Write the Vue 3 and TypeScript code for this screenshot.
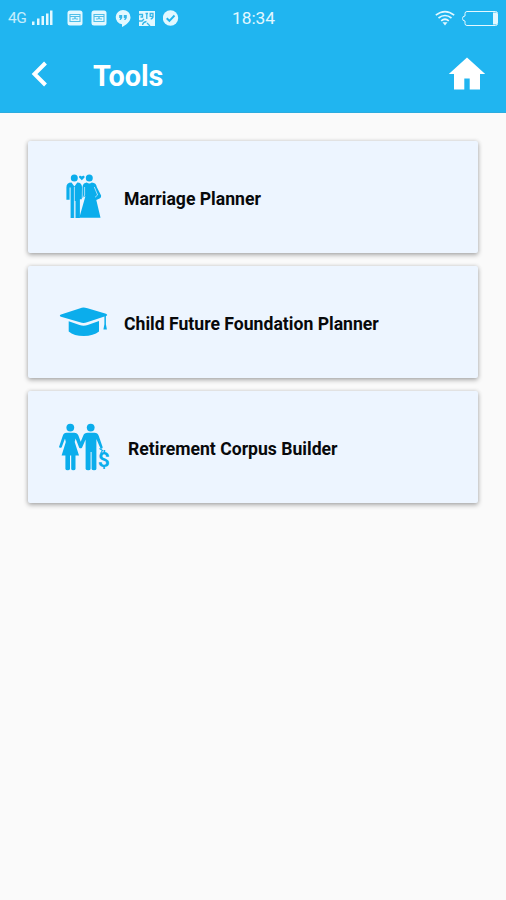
<script setup lang="ts">
interface Tool {
  id: 'marriage' | 'child' | 'retirement'
  label: string
}

const tools: Tool[] = [
  { id: 'marriage', label: 'Marriage Planner' },
  { id: 'child', label: 'Child Future Foundation Planner' },
  { id: 'retirement', label: 'Retirement Corpus Builder' },
]
</script>

<template>
  <div class="screen">
    <header class="header">
      <div class="status">
        <span class="network">4G</span>
        <svg class="signal" width="21" height="18" viewBox="0 0 21 18">
          <path d="M0 12.500h2.500V16H0zM5 9.500h2.500V16H5zM9.500 7H12v9H9.500zM14 4.500h2.500V16H14zM18 1.500h2.500V16H18z" fill="currentColor" />
        </svg>
        <div class="notices">
          <svg v-for="n in 2" :key="n" width="16" height="16" viewBox="0 0 16 16">
            <rect x="0.500" y="0.500" width="15" height="15" rx="2.500" fill="currentColor" />
            <path d="M3 4.500h10v7H3zM3 6.500h10M5 9h2l1-1.500L9 9h2" fill="none" stroke="#4fbfe9" stroke-width="1.100" />
          </svg>
          <svg width="16" height="18" viewBox="0 0 16 18">
            <path d="M8 1a7.500 7.200 0 0 0-1 14.300V18c4-2 8.500-5.200 8.500-9.800A7.500 7.200 0 0 0 8 1z" fill="currentColor" />
            <path d="M4.200 6h3v3L5.800 11H4.500l.8-2H4.200zM8.800 6h3v3l-1.400 2H9.100l.8-2H8.800z" fill="#35b6e8" />
          </svg>
          <svg width="16" height="17" viewBox="0 0 16 17">
            <path d="M0 1h16v15H0z" fill="currentColor" />
            <path d="M0 4.500h3.500v2.500H1.500M6.500 3.500H9M7.800 3.500V9M14 7.500v-4h-2.800v2.800H14q0 2.200-2.300 2.700M0 11h3l2-2M3.500 15q.5-3 4-3.500M8 13l3 3" fill="none" stroke="#35b6e8" stroke-width="1.300" />
          </svg>
          <svg width="16" height="16" viewBox="0 0 16 16">
            <circle cx="7.500" cy="8" r="7.700" fill="currentColor" />
            <path d="M3.700 8.200l2.700 2.600 5.100-5.300" fill="none" stroke="#22b5ee" stroke-width="1.900" />
          </svg>
        </div>
        <span class="clock">18:34</span>
        <svg class="wifi" width="20" height="16" viewBox="0 0 20 16" fill="none" stroke="currentColor" stroke-width="1.700">
          <path d="M.8 5.200Q10-2 19.200 5.200M3.500 8Q10 3 16.500 8M6.200 10.800Q10 7.700 13.800 10.800" />
          <path d="M7.500 12.200h5L10 15.500z" fill="currentColor" stroke="none" />
        </svg>
        <svg class="battery" width="38" height="17" viewBox="0 0 38 17">
          <path d="M6 1.500h28.500q2 0 2 2v10q0 2-2 2H6q-2 0-2-2V11q-2.500 0-2.500-2.500T4 6V3.500q0-2 2-2z" fill="none" stroke="currentColor" stroke-width="1" />
          <path d="M32 2.500h4v12h-4z" fill="currentColor" />
        </svg>
      </div>
      <nav class="bar">
        <svg class="back" width="18" height="26" viewBox="0 0 18 26">
          <path d="M14.500 2L3.500 13l11 11" fill="none" stroke="currentColor" stroke-width="4" />
        </svg>
        <h1 class="title">Tools</h1>
        <svg class="home" width="38" height="34" viewBox="0 0 38 34">
          <path d="M19 .5L.8 17H6v15.500h10.300v-11h5.400v11H32V17h5.200z" fill="currentColor" />
        </svg>
      </nav>
    </header>

    <main class="list">
      <section v-for="tool in tools" :key="tool.id" class="card" :class="tool.id">
        <svg v-if="tool.id === 'marriage'" class="icon" viewBox="0 0 56 56" fill="currentColor">
          <circle cx="18.300" cy="9" r="3.500" />
          <circle cx="33.300" cy="9" r="3.500" />
          <path d="M25.800 11.300l-2.700-2.700c-.6-2 1.800-2.500 2.700-1 .9-1.500 3.300-1 2.700 1z" />
          <path d="M15.500 13.500l2.900 4 2.900-4c3.200 0 4.500 1.600 4.700 4.600l-.2 12.200h-1.900V49h-4.400V32h-1v17h-3.900V18.500h-1v12.300h-3.200V18.500c0-3.200 1.700-5 5.100-5z" />
          <path d="M30.800 13.500q2.500 2.200 5 0c3.200.2 4.500 1.800 5.100 4.700l4.200 8.300q.5 2.200-1.500 3l-3.300 1.500L44.500 48.700H23.300l6.100-21.400L26.500 29V18c.3-2.800 1.600-4.300 4.300-4.500z" />
          <path d="M18.400 18v31M28.600 18v8l-2 4M38.300 18l3.300 8-2.500 2.200" fill="none" stroke="#edf5ff" stroke-width=".7" />
        </svg>

        <svg v-else-if="tool.id === 'child'" class="icon" viewBox="0 0 56 56" fill="currentColor">
          <path d="M27.500 13.500q1.500 0 4 .8l18.500 5.400q2.500 1.300 0 2.400l-19 6.200q-3.500 1.300-7 0L5 22.800q-2.300-1.200 0-2.400l18.500-6q2.500-.9 4-.9z" />
          <path d="M12.700 27.200l10.800 3.900q4.200 1.200 8.200 0l11.300-4v10.500q-5.500 4.400-15.200 4.500-9.800 0-15.100-4.500z" />
          <path d="M48.400 22h1.500v8.200l1 5.300h-3.500l1-5.300z" />
        </svg>

        <svg v-else class="icon" viewBox="0 0 56 56" fill="currentColor">
          <circle cx="14.300" cy="8.600" r="3.900" />
          <circle cx="34.700" cy="8.600" r="3.900" />
          <path d="M10.500 13.800h7.700q3.200 0 4.300 3l2.200 6 2.600-6.200q1-2.800 4.200-2.800h7q3.200 0 4.200 3l4 11.500q0 1.900-2.200 1.300L40.400 20v30q-.3 1.300-2.300 1.300-2.200 0-2.500-1.300V33h-1v17q-.3 1.300-2.400 1.300T29.600 50V20.500L26 28.700q-1.500 1.200-2.800 0l-3.600-9.200-.9 3.500 4.300 13.500h-3.500V50q-.3 1.300-2.200 1.300T15.200 50V36.500H14V50q-.3 1.300-2.300 1.300T9.400 50V36.500H5.600L9.800 23 9 19.500l-3.300 8.700q-1.300 1.400-2.700-.2L6.700 17q1-3.200 3.800-3.200z" />
          <path d="M43.500 29.500l3 2-2 3" fill="none" stroke="currentColor" stroke-width="1.100" />
          <text class="dollar" x="47.800" y="48" text-anchor="middle">$</text>
        </svg>

        <span class="label">{{ tool.label }}</span>
      </section>
    </main>
  </div>
</template>

<style>
body {
  margin: 0;
  background: #fafafa;
}
</style>

<style scoped>
.screen {
  min-height: 900px;
  background: #fafafa;
  font-family: Roboto, "Liberation Sans", sans-serif;
}

.header {
  box-sizing: border-box;
  height: 113px;
  background: #20b5f0;
  border-bottom: 1px solid #2bacdf;
  color: #fff;
}

.status {
  display: flex;
  align-items: center;
  box-sizing: border-box;
  height: 36px;
  padding: 0 7px 0 8px;
  color: #e2f8ff;
}

.network {
  width: 24px;
  font-size: 15.500px;
  letter-spacing: -0.5px;
  opacity: 0.85;
}

.notices {
  display: flex;
  align-items: center;
  gap: 8px;
  margin-left: 14px;
}

.clock {
  margin-left: 53px;
  font-size: 17.300px;
}

.wifi {
  margin-left: auto;
}

.battery {
  margin-left: 6px;
}

.bar {
  display: flex;
  align-items: center;
  height: 76px;
  padding: 0 20px 0 31px;
}

.title {
  margin: 3px 0 0 44px;
  font-size: 28.800px;
  line-height: 34px;
  font-weight: 700;
}

.home {
  margin-left: auto;
}

.list {
  display: flex;
  flex-direction: column;
  gap: 13px;
  padding: 27.500px 28px 0;
}

.card {
  display: flex;
  align-items: center;
  gap: 12px;
  box-sizing: border-box;
  height: 112px;
  padding-left: 28px;
  border-radius: 2px;
  background: #edf5ff;
  box-shadow: 0 2px 5px rgba(0, 0, 0, 0.3), 0 0 4px rgba(0, 0, 0, 0.12);
}

.card.retirement {
  gap: 16px;
}

.icon {
  flex: none;
  width: 56px;
  height: 56px;
  color: #0badec;
}

.dollar {
  font: 700 21px Roboto, "Liberation Sans", sans-serif;
}

.label {
  padding-top: 5px;
  color: #08090b;
  font-size: 17.620px;
  line-height: 24px;
  font-weight: 700;
  white-space: nowrap;
}
</style>
